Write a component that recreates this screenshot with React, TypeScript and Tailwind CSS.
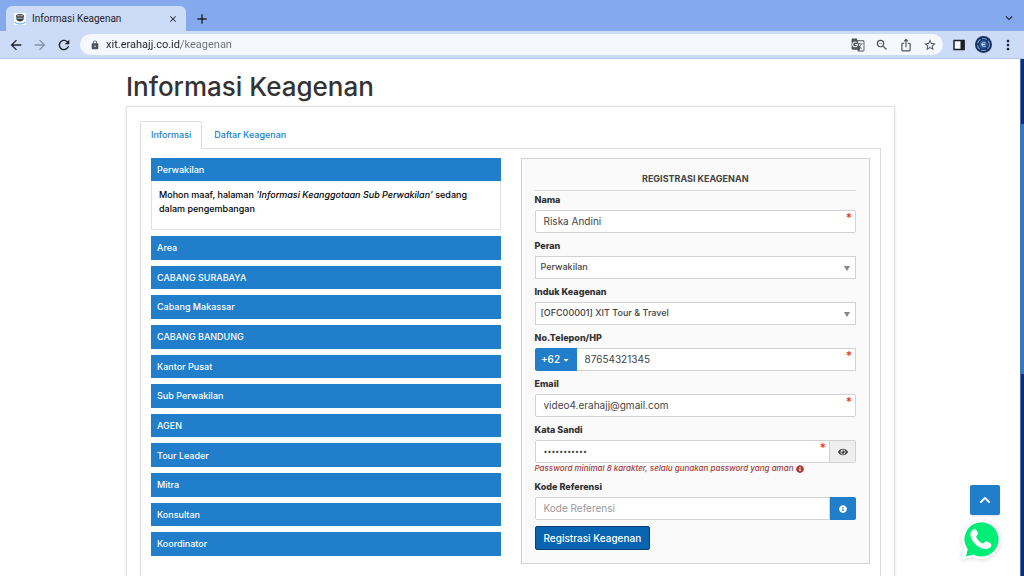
import { useState, type ReactNode } from "react";
import { FaCaretDown, FaChevronUp, FaEye, FaInfoCircle } from "react-icons/fa";
import {
  MdArrowBack,
  MdArrowForward,
  MdClose,
  MdGTranslate,
  MdAdd,
  MdIosShare,
  MdKeyboardArrowDown,
  MdLock,
  MdMoreVert,
  MdRefresh,
  MdStarBorder,
  MdZoomOut,
} from "react-icons/md";

const agencies = [
  "Area",
  "CABANG SURABAYA",
  "Cabang Makassar",
  "CABANG BANDUNG",
  "Kantor Pusat",
  "Sub Perwakilan",
  "AGEN",
  "Tour Leader",
  "Mitra",
  "Konsultan",
  "Koordinator",
];

const inputClass =
  "h-[23px] w-full min-w-0 border border-[#d2d2d2] bg-white px-2 pb-px font-normal text-[#444] outline-none placeholder:text-[#999]";

function BrowserBar() {
  const [url, setUrl] = useState("xit.erahajj.co.id/keagenan");

  return (
    <header className="shrink-0 font-[Roboto,sans-serif] text-[#1f2328]">
      {/* Tab strip */}
      <div className="flex h-[31px] items-end bg-[#84a9ed] pr-2 pl-1.5">
        <div className="flex h-[25px] w-[180px] items-center rounded-t-md bg-[#cbdbf8] px-2">
          <Favicon />
          <span className="ml-1.5 flex-1 text-[10px]">Informasi Keagenan</span>
          <button aria-label="Tutup tab">
            <MdClose className="size-2.5" stroke="currentColor" />
          </button>
        </div>
        <button aria-label="Tab baru" className="mb-1 ml-2">
          <MdAdd className="size-4" />
        </button>
        <button aria-label="Cari tab" className="mb-1.5 ml-auto">
          <MdKeyboardArrowDown className="size-3.5" />
        </button>
      </div>

      {/* Toolbar */}
      <div className="flex h-7 items-center gap-2 border-b border-[#b3c8ea] bg-[#cbdbf8] px-2">
        <button aria-label="Kembali">
          <MdArrowBack className="size-4" stroke="currentColor" />
        </button>
        <button aria-label="Maju" className="text-[#8491aa]">
          <MdArrowForward className="size-4" />
        </button>
        <button aria-label="Muat ulang">
          <MdRefresh className="size-4" stroke="currentColor" />
        </button>
        <div className="flex h-[21px] flex-1 items-center gap-2.5 rounded-full bg-[#f5f8fe] pr-1.5 pl-2.5 text-[#4d5259]">
          <MdLock className="size-2.5 shrink-0" />
          <input
            aria-label="Alamat"
            value={url}
            onChange={(e) => setUrl(e.target.value)}
            className="-ml-1 min-w-0 flex-1 bg-[linear-gradient(to_right,#1f2328_75px,#6a6f76_75px)] bg-clip-text pt-0.5 text-[11px] text-transparent outline-none"
          />
          <MdGTranslate className="size-3.5" />
          <MdZoomOut className="size-3.5" />
          <MdIosShare className="size-3.5" />
          <MdStarBorder className="size-3.5" />
        </div>
        <button aria-label="Panel samping" className="mx-0.5">
          <svg viewBox="0 0 12 12" className="size-3">
            <path d="M1 1.5h10v9H1z" fill="#f5f8fe" stroke="#1b1f27" strokeWidth="1.5" />
            <path d="M7.5 1h4v10h-4z" fill="#1b1f27" />
          </svg>
        </button>
        <button aria-label="Profil">
          <ProfileMark />
        </button>
        <button aria-label="Menu">
          <MdMoreVert className="size-4" />
        </button>
      </div>
    </header>
  );
}

function Favicon() {
  return (
    <svg viewBox="0 0 12 12" className="size-3">
      <path d="M0 0h12v12H0z" fill="#f4f7fb" />
      <path d="M2 2.2Q6-.2 10 2.200L9.400 6.800Q8.500 8.600 6 8.600T2.600 6.800z" fill="#34383c" />
      <path d="M2.800 2.800h6.400M3.200 5.200h5.600" fill="none" stroke="#d6d8da" strokeWidth=".9" />
      <path d="M.6 9.400Q6 12.600 11.400 9.400" fill="none" stroke="#5aa7e6" strokeWidth="1" />
    </svg>
  );
}

function ProfileMark() {
  return (
    <svg viewBox="0 0 17 17" className="size-[17px]">
      <circle cx="8.500" cy="8.500" r="8.500" fill="#16305f" />
      <circle cx="8.500" cy="8.500" r="6" fill="none" stroke="#6f97d0" strokeWidth="1.200" strokeDasharray="5 1.500" />
      <circle cx="8.500" cy="8.500" r="4.200" fill="#2c5a9c" />
      <path d="M10.500 6.700H8.400Q6.800 6.700 6.800 8.500t1.600 1.800h2.100M6.800 8.500h3.400" fill="none" stroke="#dbe9fa" strokeWidth=".9" />
    </svg>
  );
}

function WhatsAppMark() {
  return (
    <svg viewBox="0 0 42 42" className="size-[42px] drop-shadow-sm">
      <path d="M21.500 1a19.500 19.500 0 1 1-9 37L.8 40.500l3.700-10.200A19.500 19.500 0 0 1 21.500 1z" fill="#fff" />
      <path d="M21.300 3.200a17.200 17.200 0 1 1-8 32.400L6 37.500l1.700-7.100A17.200 17.200 0 0 1 21.300 3.200z" fill="#00ee76" />
      <path
        d="M13.400 10.600c-2.200 1.200-3.400 3.400-2.900 6.400 1 5.400 6.800 11.200 12.500 12.700 3.600.9 7.200-.2 8.200-2.700.5-1.300.1-2.200-.8-2.800l-3.200-1.700c-1-.5-1.900-.3-2.500.5l-.9 1.100c-.5.5-1 .5-1.600.2-2.700-1.500-4.700-3.500-5.900-6-.3-.6-.2-1 .3-1.500l.8-.9c.6-.7.7-1.300.4-2.100l-1.300-2.800c-.5-.9-1.900-1.100-3.100-.4z"
        fill="#fff"
      />
    </svg>
  );
}

function AgencyList() {
  return (
    <section className="flex flex-col gap-1.5 pb-2">
      <div>
        <button className="block h-[23px] w-full bg-[#207ecb] px-1.5 text-left text-white">Perwakilan</button>
        <div className="border border-t-0 border-[#e1e1e1] px-[7px] pt-[7px] pb-[13px] leading-[14px] text-black">
          <p>
            Mohon maaf, halaman <em>'Informasi Keanggotaan Sub Perwakilan'</em> sedang dalam pengembangan
          </p>
        </div>
      </div>
      {agencies.map((name) => (
        <button key={name} className="min-h-[23px] w-full flex-1 bg-[#207ecb] px-1.5 text-left text-white">
          {name}
        </button>
      ))}
    </section>
  );
}

function Field({ id, label, children }: { id: string; label: string; children: ReactNode }) {
  return (
    <div>
      <label htmlFor={id} className="mb-0.5 block leading-4 font-extrabold text-[#333]">
        {label}
      </label>
      {children}
    </div>
  );
}

function Required() {
  return <span className="absolute top-0.5 right-1 text-[12px] leading-3 text-[#e8322d]">*</span>;
}

function SelectBox({ id, option }: { id: string; option: string }) {
  return (
    <div className="relative">
      <select
        id={id}
        className="h-[23px] w-full appearance-none border border-[#d2d2d2] bg-white px-[5px] pb-px text-[#444] outline-none"
      >
        <option>{option}</option>
      </select>
      <svg viewBox="0 0 6 5" className="pointer-events-none absolute top-2.5 right-1.5 h-[5px] w-1.5">
        <path d="M0 0h6L3 5z" fill="#888" />
      </svg>
    </div>
  );
}

function RegistrationForm() {
  return (
    <form className="border border-[#d2d2d2] bg-[#fafafa] px-[13px] pt-3 pb-[13px]">
      <h2 className="border-b border-[#d9d9d9] pb-[3px] text-center leading-4 font-bold text-[#444]">
        REGISTRASI KEAGENAN
      </h2>
      <div className="flex flex-col gap-[5px] pt-px">
        <Field id="nama" label="Nama">
          <div className="relative">
            <input id="nama" defaultValue="Riska Andini" className={`${inputClass} rounded-xs text-[10px]`} />
            <Required />
          </div>
        </Field>
        <Field id="peran" label="Peran">
          <SelectBox id="peran" option="Perwakilan" />
        </Field>
        <Field id="induk" label="Induk Keagenan">
          <SelectBox id="induk" option="[OFC00001] XIT Tour & Travel" />
        </Field>
        <Field id="telepon" label="No.Telepon/HP">
          <div className="relative flex">
            <button
              type="button"
              className="flex w-[42px] shrink-0 items-center justify-center gap-0.5 rounded-l-xs bg-[#207ecb] text-[10px] font-medium text-white"
            >
              +62 <FaCaretDown className="size-2" />
            </button>
            <input
              id="telepon"
              type="tel"
              defaultValue="87654321345"
              className={`${inputClass} border-l-0 text-[10px]`}
            />
            <Required />
          </div>
        </Field>
        <Field id="email" label="Email">
          <div className="relative">
            <input
              id="email"
              type="email"
              defaultValue="video4.erahajj@gmail.com"
              className={`${inputClass} rounded-xs text-[10px]`}
            />
            <Required />
          </div>
        </Field>
        <Field id="sandi" label="Kata Sandi">
          <div className="flex">
            <div className="relative flex-1">
              <input
                id="sandi"
                type="password"
                defaultValue="rahasia1234"
                className={`${inputClass} rounded-l-xs text-[7px]`}
              />
              <Required />
            </div>
            <button
              type="button"
              aria-label="Lihat kata sandi"
              className="flex w-[26px] items-center justify-center rounded-r-xs border border-l-0 border-[#d2d2d2] bg-[#eee] text-[#444]"
            >
              <FaEye className="size-2.5" />
            </button>
          </div>
          <p className="flex items-center gap-0.5 text-[8px] leading-[11px] font-medium text-[#a93a3a] italic">
            Password minimal 8 karakter, selalu gunakan password yang aman
            <FaInfoCircle className="size-2" />
          </p>
        </Field>
        <Field id="kode" label="Kode Referensi">
          <div className="flex">
            <input id="kode" placeholder="Kode Referensi" className={`${inputClass} rounded-l-xs text-[10px]`} />
            <button
              type="button"
              aria-label="Info kode referensi"
              className="flex w-[26px] shrink-0 items-center justify-center rounded-r-xs bg-[#207ecb] text-white"
            >
              <FaInfoCircle className="size-2" />
            </button>
          </div>
        </Field>
      </div>
      <button className="mt-1.5 block h-6 rounded-xs border border-[#0b3f7c] bg-[#0864b1] px-2 text-[10px] font-medium text-white">
        Registrasi Keagenan
      </button>
    </form>
  );
}

export default function App() {
  return (
    <div className="flex h-screen flex-col overflow-hidden bg-white">
      <BrowserBar />

      <div className="relative flex min-h-0 flex-1">
        <main className="min-w-0 flex-1 overflow-hidden pt-2 pr-4 pl-[17px] font-[Inter,sans-serif] text-[9px] font-medium">
          <div className="mx-auto max-w-[769px]">
            <h1 className="text-[26px] leading-[39px] text-[#333]">Informasi Keagenan</h1>
            <div className="border border-[#e2e2e2] px-[13px] pt-3.5 pb-10 shadow-sm">
              <nav className="flex text-[#207ecb]">
                <a
                  href="#informasi"
                  className="relative z-10 -mb-px rounded-t-xs border border-b-0 border-[#ddd] bg-white px-2.5 leading-[26px]"
                >
                  Informasi
                </a>
                <a href="#daftar" className="px-3 leading-[27px]">
                  Daftar Keagenan
                </a>
              </nav>
              <div className="grid grid-cols-2 gap-5 border border-[#ddd] px-2.5 pt-[9px] pb-10">
                <AgencyList />
                <RegistrationForm />
              </div>
            </div>
          </div>
        </main>

        {/* Scroll track */}
        <div className="flex w-1 flex-col border-l border-[#4d6fa8] bg-[#06307f]">
          <div className="flex-[65]" />
          <div className="flex-[250] bg-[#207ecb]" />
          <div className="flex-[202]" />
        </div>

        {/* Floating actions */}
        <div className="absolute right-[22px] bottom-[15px] flex flex-col items-end gap-1">
          <button
            aria-label="Kembali ke atas"
            className="mr-0.5 flex size-[30px] items-center justify-center rounded-xs bg-[#207ecb] text-white shadow"
          >
            <FaChevronUp className="size-3" />
          </button>
          <a href="#whatsapp" aria-label="WhatsApp">
            <WhatsAppMark />
          </a>
        </div>
      </div>
    </div>
  );
}
